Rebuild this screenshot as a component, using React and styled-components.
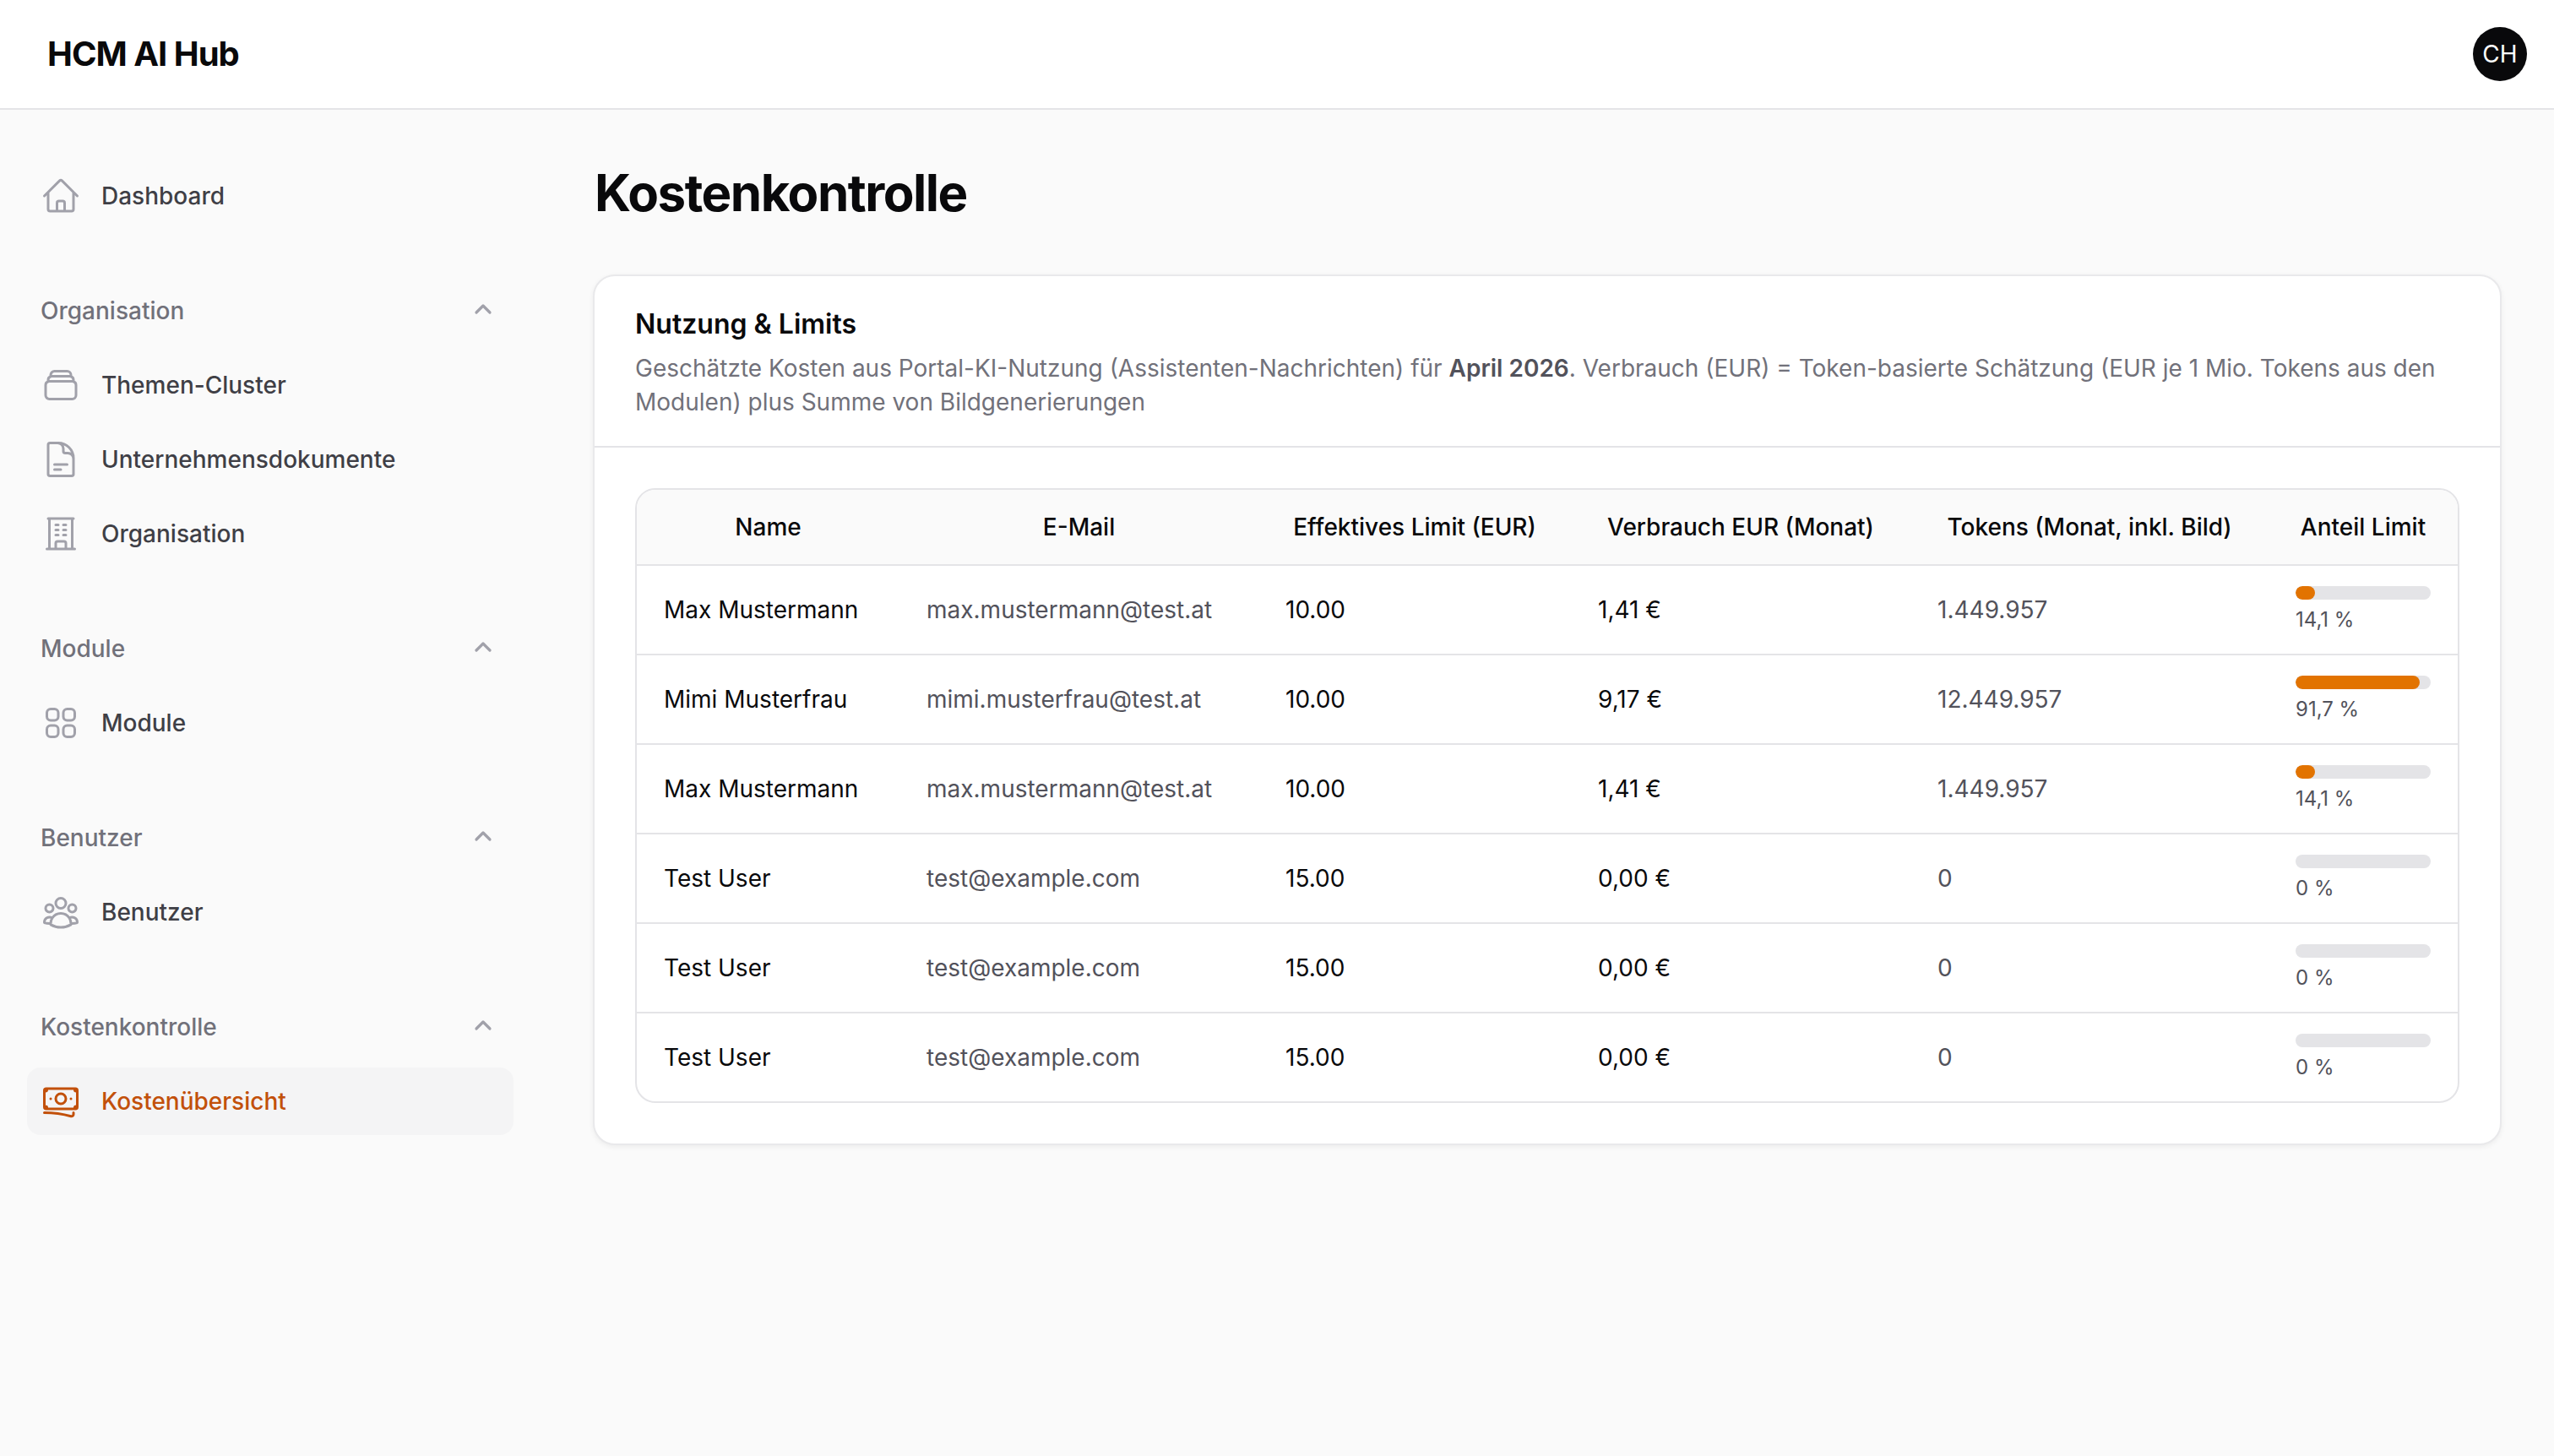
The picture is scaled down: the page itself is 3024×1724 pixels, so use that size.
import styled, { createGlobalStyle } from "styled-components";
import { ChevronUp } from "lucide-react";
import {
  HiOutlineHome,
  HiOutlineRectangleStack,
  HiOutlineDocumentText,
  HiOutlineBuildingOffice,
  HiOutlineSquares2X2,
  HiOutlineUserGroup,
  HiOutlineBanknotes,
} from "react-icons/hi2";

const GlobalStyle = createGlobalStyle`
  html, body {
    margin: 0;
    padding: 0;
    background: #fafafa;
  }
  body {
    font-family: Inter, "Liberation Sans", sans-serif;
    color: #09090b;
  }
  * {
    box-sizing: border-box;
  }
`;

const Page = styled.div`
  min-height: 1724px;
  display: flex;
  flex-direction: column;
  background: #fafafa;
`;

const Header = styled.header`
  height: 130px;
  padding: 0 32px 0 56px;
  display: flex;
  align-items: center;
  justify-content: space-between;
  background: #ffffff;
  border-bottom: 2px solid #e4e4e7;
`;

const Logo = styled.div`
  font-size: 40px;
  line-height: 56px;
  font-weight: 700;
  letter-spacing: -1px;
  color: #09090b;
`;

const Avatar = styled.div`
  width: 64px;
  height: 64px;
  border-radius: 50%;
  display: flex;
  align-items: center;
  justify-content: center;
  background: #09090b;
  color: #ffffff;
  font-size: 28px;
`;

const Body = styled.div`
  display: flex;
  flex: 1;
`;

const Sidebar = styled.nav`
  width: 640px;
  flex-shrink: 0;
  padding: 62px 32px 0;
  display: flex;
  flex-direction: column;
  gap: 56px;
`;

const NavGroup = styled.div`
  display: flex;
  flex-direction: column;
  gap: 8px;
`;

const GroupLabel = styled.div`
  height: 80px;
  padding: 0 20px 0 16px;
  display: flex;
  align-items: center;
  justify-content: space-between;
  font-size: 28px;
  font-weight: 500;
  color: #71717a;

  svg {
    width: 32px;
    height: 32px;
    margin-bottom: 4px;
    color: #a1a1aa;
    stroke-width: 2.4;
  }
`;

const NavItem = styled.a`
  height: 80px;
  padding: 0 16px;
  display: flex;
  align-items: center;
  gap: 24px;
  border-radius: 16px;
  font-size: 28px;
  font-weight: 500;
  color: ${(props) => (props.$active ? "#c2500a" : "#3f3f46")};
  background: ${(props) => (props.$active ? "#f4f4f5" : "transparent")};

  svg {
    width: 48px;
    height: 48px;
    flex-shrink: 0;
    color: ${(props) => (props.$active ? "#c2500a" : "#a1a1aa")};
  }
`;

const Main = styled.main`
  flex: 1;
  padding: 62px 62px 0;
`;

const Title = styled.h1`
  margin: 0 0 61px 2px;
  font-size: 60px;
  line-height: 72px;
  font-weight: 700;
  letter-spacing: -1.5px;
  color: #09090b;
`;

const Card = styled.section`
  background: #ffffff;
  border: 2px solid #e9e9eb;
  border-radius: 26px;
  box-shadow: 0 2px 6px rgba(0, 0, 0, 0.06);
`;

const CardHead = styled.div`
  padding: 33px 48px 32px;
  border-bottom: 2px solid #e4e4e7;
`;

const CardTitle = styled.h2`
  margin: 0 0 8px;
  font-size: 32px;
  line-height: 48px;
  font-weight: 600;
  color: #09090b;
`;

const CardText = styled.p`
  margin: 0;
  font-size: 28px;
  line-height: 40px;
  color: #71717a;

  strong {
    font-weight: 600;
    color: #52525b;
  }
`;

const CardBody = styled.div`
  padding: 48px;
`;

const TableWrap = styled.div`
  border: 2px solid #e4e4e7;
  border-radius: 24px;
  overflow: hidden;
`;

const Table = styled.table`
  width: 100%;
  table-layout: fixed;
  border-collapse: separate;
  border-spacing: 0;
  font-size: 28px;
  line-height: 40px;
`;

const HeadCell = styled.th`
  height: 90px;
  padding: 0 8px;
  text-align: center;
  font-weight: 500;
  color: #09090b;
  background: #fafafa;
  border-bottom: 2px solid #e4e4e7;
  white-space: nowrap;
`;

const Row = styled.tr`
  td {
    height: 106px;
    border-bottom: 2px solid #e4e4e7;
  }

  &:last-child td {
    height: 104px;
    border-bottom: none;
  }
`;

const Cell = styled.td`
  padding: 0 32px;
  white-space: nowrap;
  color: ${(props) => (props.$muted ? "#52525b" : "#09090b")};
`;

const Usage = styled.div`
  width: 160px;
  display: flex;
  flex-direction: column;
  gap: 8px;
`;

const Track = styled.div`
  height: 16px;
  border-radius: 8px;
  overflow: hidden;
  background: #e4e4e7;
`;

const Fill = styled.div`
  height: 100%;
  border-radius: 8px;
  background: #e27300;
`;

const UsageText = styled.div`
  font-size: 24px;
  line-height: 32px;
  color: #52525b;
`;

const navGroups = [
  {
    label: "Organisation",
    items: [
      { label: "Themen-Cluster", Icon: HiOutlineRectangleStack },
      { label: "Unternehmensdokumente", Icon: HiOutlineDocumentText },
      { label: "Organisation", Icon: HiOutlineBuildingOffice },
    ],
  },
  { label: "Module", items: [{ label: "Module", Icon: HiOutlineSquares2X2 }] },
  { label: "Benutzer", items: [{ label: "Benutzer", Icon: HiOutlineUserGroup }] },
  {
    label: "Kostenkontrolle",
    items: [{ label: "Kostenübersicht", Icon: HiOutlineBanknotes, active: true }],
  },
];

const columns = [
  { label: "Name", width: 311 },
  { label: "E-Mail", width: 425 },
  { label: "Effektives Limit (EUR)", width: 370 },
  { label: "Verbrauch EUR (Monat)", width: 402 },
  { label: "Tokens (Monat, inkl. Bild)", width: 424 },
  { label: "Anteil Limit", width: 224 },
];

const rows = [
  { name: "Max Mustermann", email: "max.mustermann@test.at", limit: "10.00", cost: "1,41 €", tokens: "1.449.957", pct: 14.1, pctText: "14,1 %" },
  { name: "Mimi Musterfrau", email: "mimi.musterfrau@test.at", limit: "10.00", cost: "9,17 €", tokens: "12.449.957", pct: 91.7, pctText: "91,7 %" },
  { name: "Max Mustermann", email: "max.mustermann@test.at", limit: "10.00", cost: "1,41 €", tokens: "1.449.957", pct: 14.1, pctText: "14,1 %" },
  { name: "Test User", email: "test@example.com", limit: "15.00", cost: "0,00 €", tokens: "0", pct: 0, pctText: "0 %" },
  { name: "Test User", email: "test@example.com", limit: "15.00", cost: "0,00 €", tokens: "0", pct: 0, pctText: "0 %" },
  { name: "Test User", email: "test@example.com", limit: "15.00", cost: "0,00 €", tokens: "0", pct: 0, pctText: "0 %" },
];

function App() {
  return (
    <Page>
      <GlobalStyle />
      <Header>
        <Logo>HCM AI Hub</Logo>
        <Avatar>CH</Avatar>
      </Header>
      <Body>
        <Sidebar>
          <NavItem>
            <HiOutlineHome />
            Dashboard
          </NavItem>
          {navGroups.map((group) => (
            <NavGroup key={group.label}>
              <GroupLabel>
                {group.label}
                <ChevronUp />
              </GroupLabel>
              {group.items.map(({ label, Icon, active }) => (
                <NavItem key={label} $active={active}>
                  <Icon />
                  {label}
                </NavItem>
              ))}
            </NavGroup>
          ))}
        </Sidebar>
        <Main>
          <Title>Kostenkontrolle</Title>
          <Card>
            <CardHead>
              <CardTitle>Nutzung &amp; Limits</CardTitle>
              <CardText>
                Geschätzte Kosten aus Portal-KI-Nutzung (Assistenten-Nachrichten) für{" "}
                <strong>April 2026</strong>. Verbrauch (EUR) = Token-basierte Schätzung (EUR je 1 Mio.
                Tokens aus den Modulen) plus Summe von Bildgenerierungen
              </CardText>
            </CardHead>
            <CardBody>
              <TableWrap>
                <Table>
                  <colgroup>
                    {columns.map((column) => (
                      <col key={column.label} width={column.width} />
                    ))}
                  </colgroup>
                  <thead>
                    <tr>
                      {columns.map((column) => (
                        <HeadCell key={column.label}>{column.label}</HeadCell>
                      ))}
                    </tr>
                  </thead>
                  <tbody>
                    {rows.map((row, index) => (
                      <Row key={index}>
                        <Cell>{row.name}</Cell>
                        <Cell $muted>{row.email}</Cell>
                        <Cell>{row.limit}</Cell>
                        <Cell>{row.cost}</Cell>
                        <Cell $muted>{row.tokens}</Cell>
                        <Cell>
                          <Usage>
                            <Track>
                              <Fill style={{ width: `${row.pct}%` }} />
                            </Track>
                            <UsageText>{row.pctText}</UsageText>
                          </Usage>
                        </Cell>
                      </Row>
                    ))}
                  </tbody>
                </Table>
              </TableWrap>
            </CardBody>
          </Card>
        </Main>
      </Body>
    </Page>
  );
}

export default App;
